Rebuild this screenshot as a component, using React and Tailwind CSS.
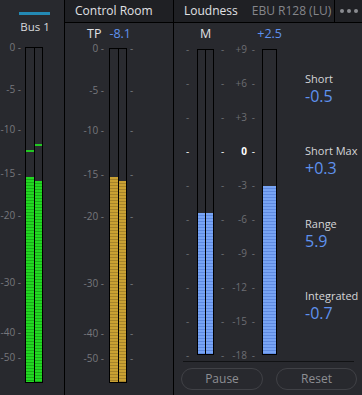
import React from "react"

const busTicks = [
    { label: "0", top: 0 },
    { label: "-5", top: 42 },
    { label: "-10", top: 82 },
    { label: "-15", top: 126 },
    { label: "-20", top: 168 },
    { label: "-30", top: 235 },
    { label: "-40", top: 285 },
    { label: "-50", top: 310 },
]

const luTicks = ["+9", "+6", "+3", "0", "-3", "-6", "-9", "-12", "-15", "-18"]

const green = "bg-[repeating-linear-gradient(to_bottom,#22d822_0px,#22d822_2px,#17ad17_2px,#17ad17_3px)]"
const amber = "bg-[repeating-linear-gradient(to_bottom,#c9a133_0px,#c9a133_2px,#a6832a_2px,#a6832a_3px)]"
const blue = "bg-[repeating-linear-gradient(to_bottom,#78a4f4_0px,#78a4f4_2px,#5f8ae0_2px,#5f8ae0_3px)]"

const Bar = ({ fillTop, fill, peak }) => (
    <div className="relative flex-1 h-full">
        {peak !== undefined && (
            <div className="absolute left-0 right-0 h-[2px] bg-[#22c822]" style={{ top: peak }} />
        )}
        <div className={`absolute left-0 right-0 bottom-0 ${fill}`} style={{ top: fillTop }} />
    </div>
)

const StereoMeter = ({ height, fill, fills, peaks, tickWidth, tickRight, rightDash }) => (
    <div className="flex" style={{ height }}>
        <div className="relative" style={{ width: tickWidth }}>
            {busTicks.map(t => (
                <div key={t.label}
                    className="absolute text-[10px] leading-[12px] text-[#76777c] whitespace-nowrap"
                    style={{ top: t.top - 6, right: tickRight }}>
                    {t.label} -
                </div>
            ))}
        </div>
        <div className="w-[18px] h-full flex border border-black bg-[#2a2b30]">
            <Bar fillTop={fills[0]} fill={fill} peak={peaks && peaks[0]} />
            <div className="w-px h-full bg-black" />
            <Bar fillTop={fills[1]} fill={fill} peak={peaks && peaks[1]} />
        </div>
        {rightDash && (
            <div className="relative w-[10px]">
                {busTicks.map(t => (
                    <div key={t.label} className="absolute left-[3px] text-[10px] leading-[12px] text-[#76777c]"
                        style={{ top: t.top - 6 }}>-</div>
                ))}
            </div>
        )}
    </div>
)

const Stat = ({ label, value }) => (
    <div className="h-[72.5px]">
        <div className="text-[11px] leading-[14px] text-[#d4d5d8] whitespace-nowrap">{label}</div>
        <div className="text-[16px] leading-[20px] text-[#5f92ee]">{value}</div>
    </div>
)

const App = () => {
    return (
        <div className="w-[362px] h-[395px] bg-[#28292e] flex overflow-hidden font-['Open_Sans',sans-serif]">
            {/* Bus 1 */}
            <div className="w-[65px] h-full border-r border-black flex flex-col">
                <div className="mt-[12px] ml-[19px] w-[31px] h-[3px] bg-[#2389b4]" />
                <div className="mt-[4px] text-center text-[11.5px] leading-[16px] text-[#d8d9dc] pl-[6px]">Bus 1</div>
                <div className="mt-[12px]">
                    <StereoMeter height={336} fill={green} fills={[129, 133]} peaks={[102, 96]}
                        tickWidth={25} tickRight={4} />
                </div>
            </div>

            {/* Control Room */}
            <div className="w-[109px] h-full border-r border-black flex flex-col">
                <div className="h-[23px] bg-[#1f2024] border-b border-black pl-[10px] text-[12px] leading-[22px] text-[#e0e1e4] whitespace-nowrap">
                    Control Room
                </div>
                <div className="mt-[3px] h-[16px] flex text-[12.5px] leading-[16px]">
                    <span className="ml-[22px] text-[#e0e1e4]">TP</span>
                    <span className="ml-[8px] text-[#5f92ee]">-8.1</span>
                </div>
                <div className="mt-[6px]">
                    <StereoMeter height={335} fill={amber} fills={[128, 132]}
                        tickWidth={44} tickRight={5} rightDash />
                </div>
            </div>

            {/* Loudness */}
            <div className="flex-1 min-w-0 h-full flex flex-col">
                <div className="h-[23px] bg-[#1f2024] border-b border-black flex items-center whitespace-nowrap">
                    <span className="ml-[10px] text-[12px] text-[#e0e1e4]">Loudness</span>
                    <span className="ml-[14px] text-[12px] text-[#85868b]">EBU R128 (LU)</span>
                    <div className="ml-auto h-full border-l border-black w-[28px] flex items-center justify-center gap-[3px]">
                        <div className="w-[4px] h-[4px] rounded-full bg-[#8a8b90]" />
                        <div className="w-[4px] h-[4px] rounded-full bg-[#8a8b90]" />
                        <div className="w-[4px] h-[4px] rounded-full bg-[#8a8b90]" />
                    </div>
                </div>

                <div className="h-[338px] flex">
                    <div className="w-[131px] shrink-0 flex flex-col">
                        <div className="mt-[3px] h-[16px] flex text-[12.5px] leading-[16px]">
                            <span className="ml-[26px] text-[#e0e1e4]">M</span>
                            <span className="ml-[46px] text-[#5f92ee]">+2.5</span>
                        </div>
                        <div className="mt-[7px] flex h-[306px]">
                            <div className="relative w-[23px]">
                                {luTicks.map((t, i) => (
                                    <div key={t} className={`absolute left-[12px] text-[10px] leading-[12px] ${t === "0" ? "text-white" : "text-[#6c6d72]"}`}
                                        style={{ top: i * 34 - 6 }}>-</div>
                                ))}
                            </div>
                            <div className="w-[17px] h-full flex border border-black bg-[#2a2b30]">
                                <Bar fillTop={163} fill={blue} />
                                <div className="w-px h-full bg-black" />
                                <Bar fillTop={163} fill={blue} />
                            </div>
                            <div className="relative w-[48px]">
                                {luTicks.map((t, i) => (
                                    <React.Fragment key={t}>
                                        <div className={`absolute left-[7px] text-[10px] leading-[12px] ${t === "0" ? "text-white" : "text-[#6c6d72]"}`}
                                            style={{ top: i * 34 - 6 }}>-</div>
                                        <div className={`absolute right-[15px] text-[10px] leading-[12px] ${t === "0" ? "text-white font-bold" : "text-[#6c6d72]"}`}
                                            style={{ top: i * 34 - 6 }}>{t}</div>
                                        <div className={`absolute right-[7px] text-[10px] leading-[12px] ${t === "0" ? "text-white" : "text-[#6c6d72]"}`}
                                            style={{ top: i * 34 - 6 }}>-</div>
                                    </React.Fragment>
                                ))}
                            </div>
                            <div className="w-[15px] h-full flex border border-black bg-[#2a2b30]">
                                <Bar fillTop={136} fill={blue} />
                            </div>
                        </div>
                    </div>
                    <div className="pt-[49px] flex flex-col">
                        <Stat label="Short" value="-0.5" />
                        <Stat label="Short Max" value="+0.3" />
                        <Stat label="Range" value="5.9" />
                        <Stat label="Integrated" value="-0.7" />
                    </div>
                </div>

                <div className="ml-[9px] mr-[8px] h-px bg-[#111214]" />
                <div className="mt-[6px] ml-[7px] flex gap-[13px]">
                    <button className="w-[82px] h-[22px] rounded-full border border-[#404146] text-[12px] text-[#8d8e93]">Pause</button>
                    <button className="w-[81px] h-[22px] rounded-full border border-[#404146] text-[12px] text-[#8d8e93]">Reset</button>
                </div>
            </div>
        </div>
    )
}

export default App
